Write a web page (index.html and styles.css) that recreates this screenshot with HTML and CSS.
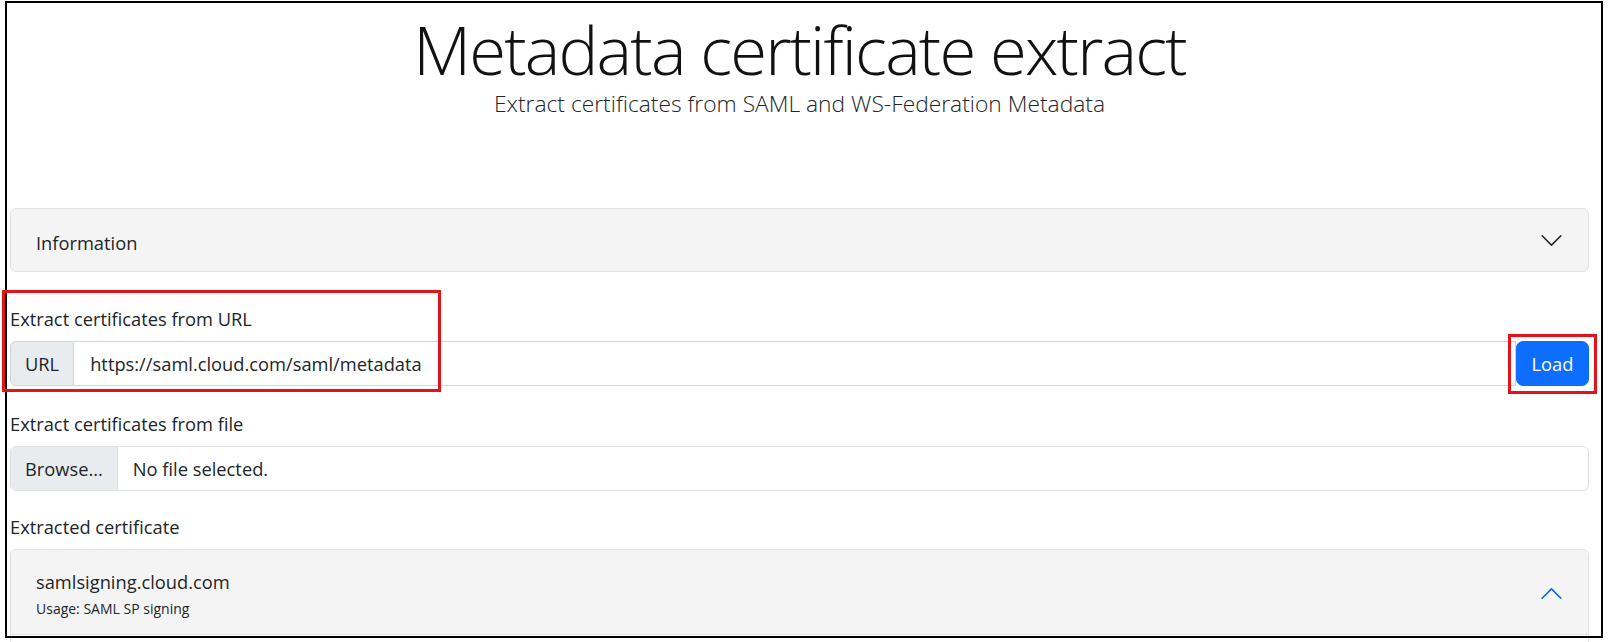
FILE: index.html
```html
<!DOCTYPE html>
<html lang="en">
<head>
<meta charset="utf-8">
<title>Metadata certificate extract</title>
<link rel="stylesheet" href="styles.css">
</head>
<body>
<main class="page">
  <header class="hero">
    <h1 class="hero-title">Metadata certificate extract</h1>
    <p class="hero-lead">Extract certificates from SAML and WS-Federation Metadata</p>
  </header>

  <section class="accordion info">
    <button class="acc-header" type="button">
      <span class="acc-title">Information</span>
      <svg class="chev" viewBox="0 0 16 16" aria-hidden="true"><path fill-rule="evenodd" d="M1.646 4.646a.5.5 0 0 1 .708 0L8 10.293l5.646-5.647a.5.5 0 0 1 .708.708l-6 6a.5.5 0 0 1-.708 0l-6-6a.5.5 0 0 1 0-.708z"/></svg>
    </button>
  </section>

  <label class="field-label label-url" for="url">Extract certificates from URL</label>
  <div class="url-row">
    <div class="input-group">
      <span class="addon">URL</span>
      <input id="url" class="text-input" type="text" value="https://saml.cloud.com/saml/metadata">
    </div>
    <button class="btn-load" type="button">Load</button>
  </div>

  <label class="field-label">Extract certificates from file</label>
  <div class="file-input">
    <span class="file-browse">Browse...</span>
    <span class="file-name">No file selected.</span>
  </div>

  <div class="field-label">Extracted certificate</div>
  <section class="accordion cert">
    <div class="cert-header">
      <div class="cert-text">
        <div class="cert-name">samlsigning.cloud.com</div>
        <div class="cert-usage">Usage: SAML SP signing</div>
      </div>
      <svg class="chev chev-up" viewBox="0 0 16 16" aria-hidden="true"><path fill-rule="evenodd" transform="rotate(180 8 8)" d="M1.646 4.646a.5.5 0 0 1 .708 0L8 10.293l5.646-5.647a.5.5 0 0 1 .708.708l-6 6a.5.5 0 0 1-.708 0l-6-6a.5.5 0 0 1 0-.708z"/></svg>
    </div>
    <div class="cert-body"></div>
  </section>
</main>

<div class="frame"></div>
<div class="mark mark-url"></div>
<div class="mark mark-load"></div>
</body>
</html>
```

FILE: styles.css
```css
*, *::before, *::after { box-sizing: border-box; }

html, body {
  margin: 0;
  padding: 0;
  height: 100%;
  overflow: hidden;
  background: #fff;
}

body {
  position: relative;
  font-family: "Open Sans", "Noto Sans", sans-serif;
  font-size: 18.3px;
  line-height: 27px;
  color: #212529;
}

.page {
  padding: 0 21px 0 10px;
}

.hero { text-align: center; }

.hero-title {
  margin: 9px 0 0;
  font-size: 67px;
  line-height: 80px;
  font-weight: 300;
  letter-spacing: -1.8px;
  color: #111;
}

.hero-lead {
  margin: 0;
  font-size: 22.8px;
  line-height: 30px;
  font-weight: 300;
}

.accordion {
  border: 1px solid #e2e2e2;
  background: #f4f4f4;
}

.info {
  margin-top: 89px;
  border-radius: 6px;
}

.acc-header {
  display: flex;
  align-items: center;
  justify-content: space-between;
  width: 100%;
  height: 62px;
  padding: 0 24px 0 25px;
  border: 0;
  background: transparent;
  font: inherit;
  color: inherit;
  text-align: left;
}

.acc-title { margin-top: 4px; }

.chev {
  width: 25px;
  height: 25px;
  flex: none;
  fill: #212529;
}

.chev-up { fill: #0c63e4; }

.field-label {
  display: block;
  margin: 0 0 9px;
}

.label-url { margin-top: 32.5px; }

.url-row {
  display: flex;
  height: 45px;
  margin-bottom: 24px;
}

.input-group {
  display: flex;
  flex: 1;
  min-width: 0;
}

.addon {
  display: flex;
  align-items: center;
  padding: 0 14px;
  background: #e9ecef;
  border: 1px solid #ced4da;
  border-radius: 6px 0 0 6px;
}

.text-input {
  flex: 1;
  min-width: 0;
  height: 45px;
  padding: 0 16px;
  border: 1px solid #ced4da;
  border-left: 0;
  border-radius: 0;
  font: inherit;
  color: #212529;
  background: #fff;
  outline: none;
}

.btn-load {
  width: 73px;
  flex: none;
  border: 1px solid #0d6efd;
  border-radius: 7px;
  background: #0d6efd;
  color: #fff;
  font: inherit;
  padding: 0;
}

.file-input {
  display: flex;
  height: 45px;
  margin-bottom: 22.5px;
  border: 1px solid #dee2e6;
  border-radius: 6px;
  overflow: hidden;
}

.file-browse {
  display: flex;
  align-items: center;
  padding: 0 14px;
  background: #e9ecef;
  border-right: 1px solid #dee2e6;
}

.file-name {
  display: flex;
  align-items: center;
  padding-left: 15px;
}

.cert {
  border-radius: 6px 6px 0 0;
  background: #fff;
}

.cert-header {
  display: flex;
  align-items: center;
  justify-content: space-between;
  padding: 18px 24px 16px 25px;
  background: #f4f4f4;
  border-radius: 6px 6px 0 0;
  box-shadow: inset 0 -1px 0 #e2e2e2;
}

.cert-usage {
  margin-top: 2.5px;
  font-size: 14px;
  line-height: 21px;
}

.cert-body { height: 80px; }

.frame {
  position: absolute;
  left: 5px;
  top: 1px;
  width: 1598px;
  height: 637px;
  border: 2px solid #000;
  pointer-events: none;
}

.mark {
  position: absolute;
  border: 3px solid #e3131b;
  pointer-events: none;
}

.mark-url {
  left: 2px;
  top: 290px;
  width: 439px;
  height: 102px;
}

.mark-load {
  left: 1508px;
  top: 334px;
  width: 89px;
  height: 60px;
}
```
